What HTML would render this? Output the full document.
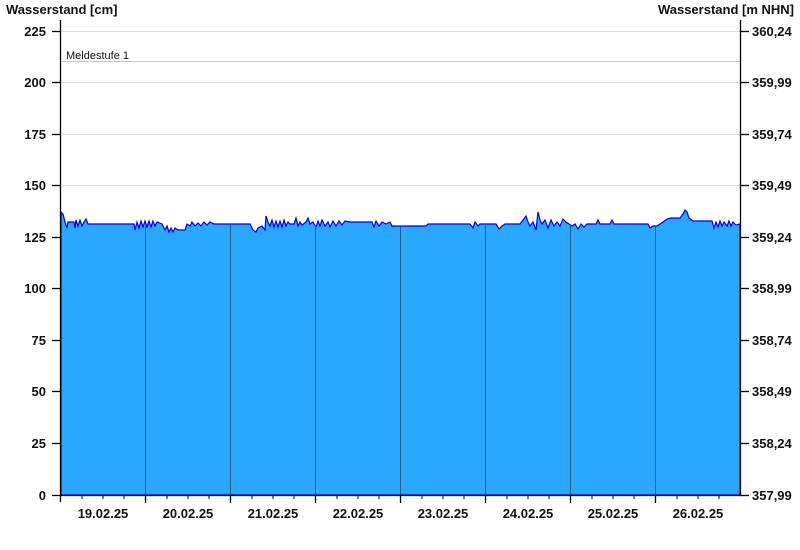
<!DOCTYPE html>
<html><head><meta charset="utf-8"><style>
html,body{margin:0;padding:0;background:#fff;width:800px;height:550px;overflow:hidden}
svg text{font-family:"Liberation Sans",Arial,sans-serif}
</style></head><body>
<svg width="800" height="550" xmlns="http://www.w3.org/2000/svg">
<text x="6" y="14" font-size="13" font-weight="bold" fill="#111">Wasserstand [cm]</text>
<text x="794" y="14" font-size="13" font-weight="bold" fill="#111" text-anchor="end">Wasserstand [m NHN]</text>
<g stroke="#dcdcdc" stroke-width="1">
<line x1="61" y1="31.5" x2="740" y2="31.5"/>
<line x1="61" y1="82.5" x2="740" y2="82.5"/>
<line x1="61" y1="134.5" x2="740" y2="134.5"/>
<line x1="61" y1="185.5" x2="740" y2="185.5"/>
<line x1="61" y1="237.5" x2="740" y2="237.5"/>
</g>
<line x1="61" y1="61.5" x2="740" y2="61.5" stroke="#f0c850" stroke-width="1"/>
<text x="66" y="59" font-size="11" fill="#111">Meldestufe 1</text>
<path fill="#29a8ff" stroke="#0000ee" stroke-width="1.2" d="M61,212 L63,214 L65,222 L67,228 L68,222 L74,222 L75,228 L76,220 L78,226 L80,220 L82,226 L84,222 L86,219 L88,224 L134,224 L135,230 L137,222 L139,228 L141,221 L143,227 L145,221 L147,227 L149,221 L151,227 L153,221 L155,226 L157,222 L162,224 L165,230 L167,226 L169,232 L171,228 L173,232 L175,228 L178,230 L185,230 L187,224 L190,226 L192,222 L195,226 L198,223 L201,226 L204,222 L207,225 L210,222 L214,224 L250,224 L253,230 L256,232 L258,228 L262,226 L265,230 L266,216 L268,222 L270,226 L272,220 L274,227 L276,221 L278,227 L280,221 L282,227 L284,220 L286,226 L288,222 L290,224 L294,224 L296,218 L298,226 L300,222 L302,225 L306,222 L308,218 L310,224 L313,222 L316,227 L318,221 L320,226 L322,220 L325,226 L328,222 L330,227 L333,221 L336,226 L339,221 L342,225 L345,221 L350,222 L372,222 L374,227 L376,221 L379,226 L382,222 L386,224 L390,222 L392,226 L426,226 L428,224 L470,224 L473,228 L475,222 L478,226 L480,224 L496,224 L499,229 L502,226 L505,224 L520,224 L523,220 L526,216 L528,222 L530,226 L533,222 L536,230 L538,212 L540,220 L542,224 L545,220 L548,228 L551,220 L554,226 L557,222 L560,226 L563,219 L566,222 L569,224 L572,226 L575,224 L578,229 L581,224 L584,227 L587,224 L596,224 L598,220 L600,224 L610,224 L612,220 L614,224 L648,224 L650,228 L653,226 L657,226 L660,224 L663,222 L667,219 L671,218 L680,218 L683,214 L685,210 L687,212 L689,218 L693,221 L712,221 L714,228 L716,222 L718,227 L720,221 L722,226 L724,222 L727,226 L729,221 L731,226 L733,222 L736,225 L740,224 L740,495 L61,495 Z"/>
<g stroke="#2a5a80" stroke-width="1">
<line x1="145.5" y1="226" x2="145.5" y2="495"/>
<line x1="230.5" y1="225" x2="230.5" y2="495"/>
<line x1="315.5" y1="225" x2="315.5" y2="495"/>
<line x1="400.5" y1="227" x2="400.5" y2="495"/>
<line x1="485.5" y1="225" x2="485.5" y2="495"/>
<line x1="570.5" y1="225" x2="570.5" y2="495"/>
<line x1="655.5" y1="227" x2="655.5" y2="495"/>
</g>
<g stroke="#000" stroke-width="1.3">
<line x1="60.5" y1="20" x2="60.5" y2="502"/>
<line x1="740.5" y1="20" x2="740.5" y2="495"/>
<line x1="52" y1="495.5" x2="741" y2="495.5"/>
<line x1="52" y1="31.5" x2="61" y2="31.5"/><line x1="52" y1="82.5" x2="61" y2="82.5"/>
<line x1="52" y1="134.5" x2="61" y2="134.5"/><line x1="52" y1="185.5" x2="61" y2="185.5"/>
<line x1="52" y1="237.5" x2="61" y2="237.5"/><line x1="52" y1="288.5" x2="61" y2="288.5"/>
<line x1="52" y1="340.5" x2="61" y2="340.5"/><line x1="52" y1="391.5" x2="61" y2="391.5"/>
<line x1="52" y1="443.5" x2="61" y2="443.5"/>
<line x1="740" y1="31.5" x2="749" y2="31.5"/><line x1="740" y1="82.5" x2="749" y2="82.5"/>
<line x1="740" y1="134.5" x2="749" y2="134.5"/><line x1="740" y1="185.5" x2="749" y2="185.5"/>
<line x1="740" y1="237.5" x2="749" y2="237.5"/><line x1="740" y1="288.5" x2="749" y2="288.5"/>
<line x1="740" y1="340.5" x2="749" y2="340.5"/><line x1="740" y1="391.5" x2="749" y2="391.5"/>
<line x1="740" y1="443.5" x2="749" y2="443.5"/><line x1="740" y1="495.5" x2="749" y2="495.5"/>
<line x1="145.5" y1="495" x2="145.5" y2="503"/><line x1="230.5" y1="495" x2="230.5" y2="503"/>
<line x1="315.5" y1="495" x2="315.5" y2="503"/><line x1="400.5" y1="495" x2="400.5" y2="503"/>
<line x1="485.5" y1="495" x2="485.5" y2="503"/><line x1="570.5" y1="495" x2="570.5" y2="503"/>
<line x1="655.5" y1="495" x2="655.5" y2="503"/>
</g>
<g stroke="#000" stroke-width="1">
<line x1="82" y1="495" x2="82" y2="499"/><line x1="103" y1="495" x2="103" y2="499"/><line x1="124" y1="495" x2="124" y2="499"/>
<line x1="167" y1="495" x2="167" y2="499"/><line x1="188" y1="495" x2="188" y2="499"/><line x1="209" y1="495" x2="209" y2="499"/>
<line x1="252" y1="495" x2="252" y2="499"/><line x1="273" y1="495" x2="273" y2="499"/><line x1="294" y1="495" x2="294" y2="499"/>
<line x1="337" y1="495" x2="337" y2="499"/><line x1="358" y1="495" x2="358" y2="499"/><line x1="379" y1="495" x2="379" y2="499"/>
<line x1="422" y1="495" x2="422" y2="499"/><line x1="443" y1="495" x2="443" y2="499"/><line x1="464" y1="495" x2="464" y2="499"/>
<line x1="507" y1="495" x2="507" y2="499"/><line x1="528" y1="495" x2="528" y2="499"/><line x1="549" y1="495" x2="549" y2="499"/>
<line x1="592" y1="495" x2="592" y2="499"/><line x1="613" y1="495" x2="613" y2="499"/><line x1="634" y1="495" x2="634" y2="499"/>
<line x1="677" y1="495" x2="677" y2="499"/><line x1="698" y1="495" x2="698" y2="499"/><line x1="719" y1="495" x2="719" y2="499"/>
</g>
<g font-size="13" font-weight="bold" fill="#111" text-anchor="end">
<text x="46" y="36">225</text><text x="46" y="87">200</text><text x="46" y="139">175</text>
<text x="46" y="190">150</text><text x="46" y="242">125</text><text x="46" y="293">100</text>
<text x="46" y="345">75</text><text x="46" y="396">50</text><text x="46" y="448">25</text><text x="46" y="500">0</text>
</g>
<g font-size="13" font-weight="bold" fill="#111">
<text x="752" y="36">360,24</text><text x="752" y="87">359,99</text><text x="752" y="139">359,74</text>
<text x="752" y="190">359,49</text><text x="752" y="242">359,24</text><text x="752" y="293">358,99</text>
<text x="752" y="345">358,74</text><text x="752" y="396">358,49</text><text x="752" y="448">358,24</text><text x="752" y="500">357,99</text>
</g>
<g font-size="13" font-weight="bold" fill="#111" text-anchor="middle">
<text x="103" y="518">19.02.25</text><text x="188" y="518">20.02.25</text><text x="273" y="518">21.02.25</text>
<text x="358" y="518">22.02.25</text><text x="443" y="518">23.02.25</text><text x="528" y="518">24.02.25</text>
<text x="613" y="518">25.02.25</text><text x="698" y="518">26.02.25</text>
</g>
</svg>
</body></html>
